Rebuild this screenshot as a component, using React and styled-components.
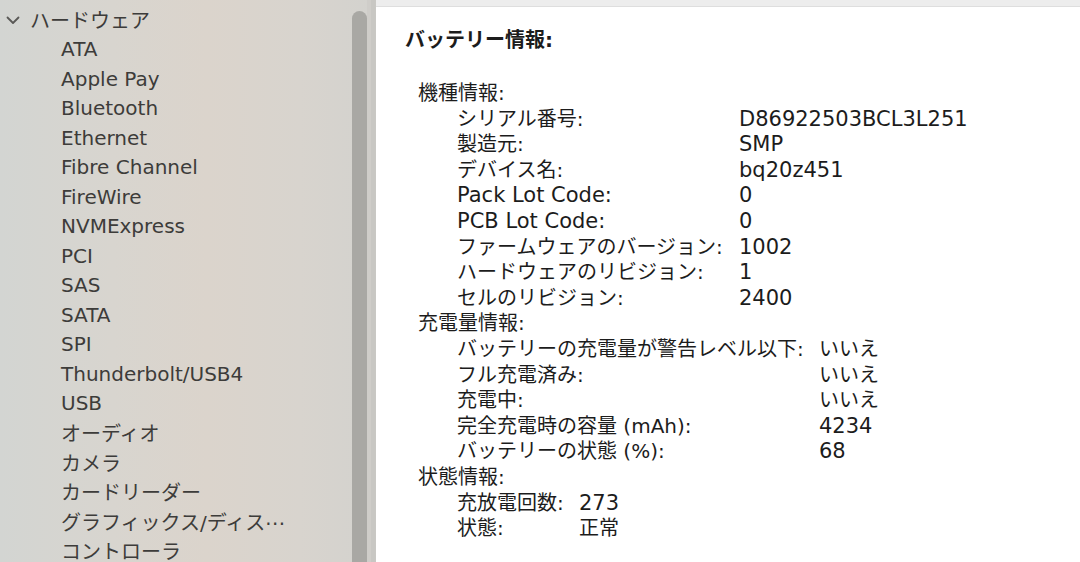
import React from "react";
import styled, { createGlobalStyle } from "styled-components";

const GlobalStyle = createGlobalStyle`
  html, body {
    margin: 0;
    padding: 0;
    background: #ffffff;
  }
  body {
    font-family: "DejaVu Sans", "Noto Sans CJK JP", sans-serif;
    -webkit-font-smoothing: antialiased;
  }
`;

const Window = styled.div`
  display: flex;
  width: 1080px;
  height: 562px;
  overflow: hidden;
`;

const Sidebar = styled.aside`
  flex: 0 0 375px;
  display: flex;
  border-right: 1px solid #c9c8c4;
  background: linear-gradient(
    90deg,
    #d3d5d2 0%,
    #d8d5cf 30%,
    #dbd4cc 55%,
    #d8d4ce 80%,
    #d3d2ce 100%
  );
`;

const List = styled.ul`
  flex: 1;
  margin: 0;
  padding: 5px 0 0;
  list-style: none;
`;

const Item = styled.li`
  display: flex;
  align-items: center;
  gap: 10px;
  height: 29.5px;
  padding-left: ${p => (p.$group ? "6px" : "61px")};
  font-size: 20px;
  color: #3d3c3a;
  white-space: nowrap;
`;

const Chevron = () => (
  <svg width="14" height="14" viewBox="0 0 14 14" aria-hidden="true">
    <path
      d="M1.5 4.5 L7 10 L12.5 4.5"
      fill="none"
      stroke="#5a5956"
      strokeWidth="1.8"
      strokeLinecap="round"
      strokeLinejoin="round"
    />
  </svg>
);

const ScrollTrack = styled.div`
  flex: 0 0 23px;
  display: flex;
  padding-top: 11px;
  box-shadow: inset -4px 0 0 #c8c7c3, inset -8px 0 0 #cfcdc9;
`;

const Thumb = styled.div`
  width: 15px;
  background: #a9a8a4;
  border-radius: 8px 8px 0 0;
`;

const Pane = styled.main`
  flex: 1;
  display: flex;
  flex-direction: column;
  background: #ffffff;
`;

const TopStrip = styled.div`
  height: 6px;
  background: #ededed;
  border-bottom: 1px solid #dedede;
`;

const Content = styled.div`
  padding: 20px 0 0 29px;
  color: #1c1c1c;
  font-size: 20px;
`;

const Title = styled.h1`
  margin: 0 0 28px;
  font-size: 20px;
  font-weight: 700;
  line-height: 26px;
`;

const SectionHead = styled.div`
  height: 25.6px;
  line-height: 25.6px;
  padding-left: 13px;
  white-space: nowrap;
`;

const Row = styled.div`
  display: grid;
  grid-template-columns: ${p => p.$labelWidth}px auto;
  align-items: center;
  height: 25.6px;
  line-height: 25.6px;
  padding-left: 52px;
  white-space: nowrap;
`;

const Value = styled.span`
  font-size: ${p => (p.$latin ? "21px" : "20px")};
`;

const Label = styled.span`
  font-size: ${p => (p.$latin ? "21px" : "20px")};
`;

const hardware = [
  "ATA",
  "Apple Pay",
  "Bluetooth",
  "Ethernet",
  "Fibre Channel",
  "FireWire",
  "NVMExpress",
  "PCI",
  "SAS",
  "SATA",
  "SPI",
  "Thunderbolt/USB4",
  "USB",
  "オーディオ",
  "カメラ",
  "カードリーダー",
  "グラフィックス/ディス⋯",
  "コントローラ",
];

const sections = [
  {
    title: "機種情報:",
    labelWidth: 282,
    rows: [
      ["シリアル番号:", "D86922503BCL3L251"],
      ["製造元:", "SMP"],
      ["デバイス名:", "bq20z451"],
      ["Pack Lot Code:", "0"],
      ["PCB Lot Code:", "0"],
      ["ファームウェアのバージョン:", "1002"],
      ["ハードウェアのリビジョン:", "1"],
      ["セルのリビジョン:", "2400"],
    ],
  },
  {
    title: "充電量情報:",
    labelWidth: 362,
    rows: [
      ["バッテリーの充電量が警告レベル以下:", "いいえ"],
      ["フル充電済み:", "いいえ"],
      ["充電中:", "いいえ"],
      ["完全充電時の容量 (mAh):", "4234"],
      ["バッテリーの状態 (%):", "68"],
    ],
  },
  {
    title: "状態情報:",
    labelWidth: 122,
    rows: [
      ["充放電回数:", "273"],
      ["状態:", "正常"],
    ],
  },
];

const isLatin = s => /^[\x20-\x7e]+$/.test(s);

export default function App() {
  return (
    <>
      <GlobalStyle />
      <Window>
        <Sidebar>
          <List>
            <Item $group>
              <Chevron />
              ハードウェア
            </Item>
            {hardware.map(name => (
              <Item key={name}>{name}</Item>
            ))}
          </List>
          <ScrollTrack>
            <Thumb />
          </ScrollTrack>
        </Sidebar>
        <Pane>
          <TopStrip />
          <Content>
            <Title>バッテリー情報:</Title>
            {sections.map(section => (
              <div key={section.title}>
                <SectionHead>{section.title}</SectionHead>
                {section.rows.map(([label, value]) => (
                  <Row key={label} $labelWidth={section.labelWidth}>
                    <Label $latin={isLatin(label)}>{label}</Label>
                    <Value $latin={isLatin(value)}>{value}</Value>
                  </Row>
                ))}
              </div>
            ))}
          </Content>
        </Pane>
      </Window>
    </>
  );
}
